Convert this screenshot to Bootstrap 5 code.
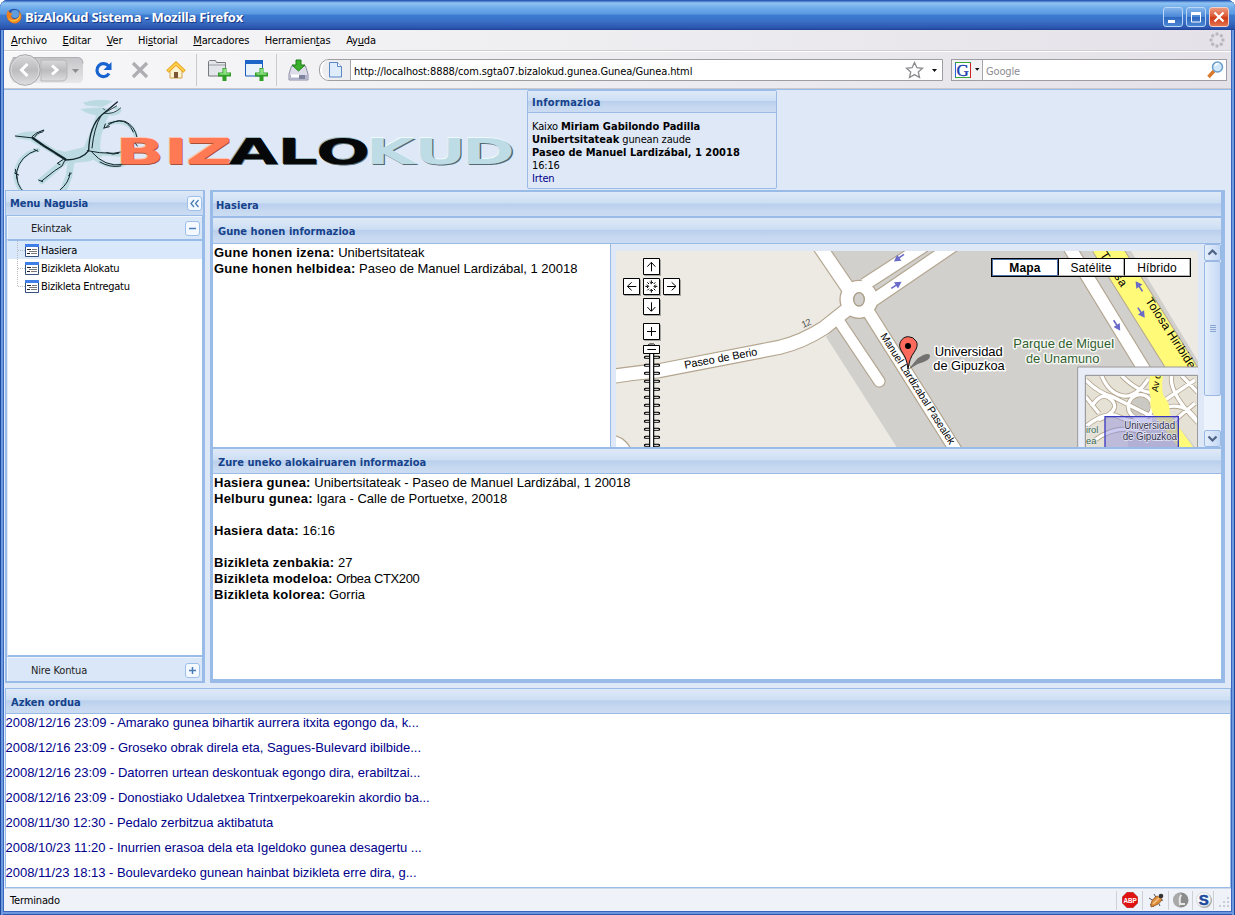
<!DOCTYPE html>
<html lang="eu">
<head>
<meta charset="utf-8">
<title>BizAloKud Sistema</title>
<link href="https://cdn.jsdelivr.net/npm/bootstrap@5.3.0/dist/css/bootstrap.min.css" rel="stylesheet">
<script src="https://cdn.jsdelivr.net/npm/bootstrap@5.3.0/dist/js/bootstrap.bundle.min.js"></script>
<style>
:root{--line:#99bbe8;--pale:#dfe8f6;--ink:#15428b}
html,body{height:915px;overflow:hidden;background:#fff}
body{font:11px/13px "DejaVu Sans Condensed",Tahoma,sans-serif;letter-spacing:-.15px;color:#000}
svg{display:block;flex:none}
.win{height:915px;background:#3a66bd;border-radius:8px 8px 0 0;padding:0 4px 4px;box-shadow:inset 1px 0 #1f49a0,inset -1px 0 #1f49a0,inset 3px 0 #6d9be0,inset -3px 0 #6d9be0,inset 0 -1px #2d55b0,inset 0 -3px #6d96dc}
.titlebar{height:30px;margin:0 -4px;padding:3px 6px 0 6px;gap:3px;border-radius:8px 8px 0 0;background:linear-gradient(#1f3f9a 0,#3d74c9 1px,#8fc3f2 3px,#69a7e9 9px,#5b9ae3 14px,#3b7cd0 15px,#3a70c6 21px,#2b55ae 28px,#1f3f94 30px)}
.titlebar .cap{font:bold 13px/28px "Open Sans",sans-serif;letter-spacing:-.24px;color:#fff;text-shadow:1px 1px #1b3a86}
.wbtns{gap:3px}
.wbtn{width:20px;height:20px;border-radius:3px;border:1px solid #bcd6f5;background:linear-gradient(#83b4ec,#4a86d6 50%,#2f68c0 52%,#4a86d4)}
.wbtn.cls{background:linear-gradient(#ec9a80,#dd5a35 45%,#cf3a16 55%,#e4734e);border-color:#f3cfc8}
.menubar{height:21px;padding:0 6px 0 7px;gap:15.700px;background:linear-gradient(90deg,#f7f7f8,#e4e2e8);border-bottom:1px solid #cfcdd2}
.menubar a{color:#000;text-decoration:none;white-space:nowrap;flex:none}
.menubar u{text-underline-offset:1px}
.tools{height:38px;padding-left:3px;border-top:1px solid #fff;border-bottom:1px solid #c9c8cd;background:linear-gradient(90deg,#f7f7f8,#e4e2e8)}
.vsep{width:1px;height:32px;background:#c9c9ce;flex:none}
.field{height:22px;border:1px solid #9d9da3;background:#fff;flex:none}
.page{height:799px;background:var(--pale);border-top:1px solid var(--line);padding:0 0 0 1px}
.phead{height:23px;padding:2px 5px 0;color:var(--ink);font-weight:bold;letter-spacing:.04px;background:linear-gradient(#dfe9f7 0,#cddff4 45%,#b9cfed 50%,#c6d8f0 75%,#cbdcf2 100%);border-bottom:1px solid var(--line)}
.info{width:250px;height:99px;margin-left:522px;border:1px solid var(--line);border-radius:2px}
.info b{letter-spacing:0}
.info a,.news a{color:#00008b;text-decoration:none}
.side{width:200px;height:493px;border:1px solid var(--line);border-width:1px 2px 2px 1px}
.sidein{border-left:1px solid var(--line);border-right:1px solid var(--line)}
.accord{height:24px;padding:1px 2px 0 23px;background:#d9e7f8;color:#222;border:solid #f0f5fc;border-width:1px 0 0 1px}
.treebox{border:solid var(--line);border-width:2px 0;border-left:1px solid #dfe8f6}
.tbtn{width:15px;height:15px;border:1px solid #9ebfe8;border-radius:3px;background:#f4f9ff;flex:none}
.leaf{height:18px;font-size:11px;letter-spacing:-.24px;padding-left:8px}
.leaf.sel{background:#d9e8fb}
.main{width:1015px;height:493px;border:solid var(--line);border-width:2px 4px 4px 3px}
.arial{font:13px/16px "Liberation Sans",Arial,sans-serif;letter-spacing:-.02px}
.arial b{letter-spacing:.25px}
.mapwrap{width:611px;border-left:1px solid var(--line);background:var(--pale);padding:4px 0 0 5px}
.sbar{width:17px;background:#edf3fd;margin-top:-4px}
.sbar div{border:1px solid #9ab8e2;border-radius:2px;background:linear-gradient(90deg,#e4eefc,#c5d9f5)}
.maptabs{top:14px;left:380px;width:200px;height:19px;border:1px solid #000;font:12px/17px "Liberation Sans",Arial,sans-serif;letter-spacing:.15px}
.maptabs span{flex:1;text-align:center;background:#fff;border:1px solid #b4b4b4;border-width:0 1px 1px 0;line-height:18px}
.maptabs span+span{border-left:1px solid #000}
.maptabs .on{font-weight:bold;border:1px solid #4a6ea8;line-height:16px}
.news{border:1px solid var(--line);border-width:1px 1px 2px;height:201px;margin-top:5px}
.news ul{padding-top:1px;margin-left:-.5px}
.news li{height:25px}
.status{height:23px;background:#eff2f8;border-top:1px solid #cfd8e6;padding:0 2px 0 6px}
.status i{width:1px;height:19px;background:#cfcfd4}
</style>
</head>
<body>
<div class="win">
  <header class="titlebar d-flex align-items-center">
    <svg width="16" height="16" viewBox="0 0 16 16" style="margin-top:-2px"><circle cx="8" cy="8" r="7.300" fill="#2a56b0"/><circle cx="9" cy="6" r="4" fill="#5f9ede"/><path d="M2 2C0 6 0 10 3 13c4 4 10 3 12-2 1-3 0-6-2-8 1 4 0 8-4 8-3 0-4-2-4-4l2-1C6 5 4 5 3 4z" fill="#ee7f1c"/><path d="M2 9c1 4 5 6 9 4 3-2 4-5 3-8 0 4-3 7-7 7-2 0-4-1-5-3z" fill="#fbb93a"/></svg>
    <span class="cap">BizAloKud Sistema - Mozilla Firefox</span>
    <div class="wbtns d-flex ms-auto">
      <span class="wbtn"><svg width="18" height="18"><rect x="4" y="12" width="7" height="3" fill="#fff"/></svg></span>
      <span class="wbtn"><svg width="18" height="18"><path d="M4.500 5v9h9V5z" fill="none" stroke="#fff"/><path d="M4 4h10v3H4z" fill="#fff"/></svg></span>
      <span class="wbtn cls"><svg width="18" height="18"><path d="M4.500 4.500l9 9m0-9l-9 9" stroke="#fff" stroke-width="2.300"/></svg></span>
    </div>
  </header>

  <nav class="menubar d-flex align-items-center">
    <a href="#"><u>A</u>rchivo</a><a href="#"><u>E</u>ditar</a><a href="#"><u>V</u>er</a><a href="#">Hi<u>s</u>torial</a><a href="#"><u>M</u>arcadores</a><a href="#">Herramien<u>t</u>as</a><a href="#">Ay<u>u</u>da</a>
    <svg class="ms-auto" width="16" height="16" viewBox="-8 -8 16 16" fill="#b9b9bd"><circle cy="-6" r="1.700"/><circle cx="4.300" cy="-4.300" r="1.700"/><circle cx="6" r="1.700"/><circle cx="4.300" cy="4.300" r="1.700"/><circle cy="6" r="1.700"/><circle cx="-4.300" cy="4.300" r="1.700"/><circle cx="-6" r="1.700"/><circle cx="-4.300" cy="-4.300" r="1.700"/></svg>
  </nav>

  <div class="tools d-flex align-items-center">
    <svg width="78" height="32" viewBox="0 0 78 32">
      <defs><linearGradient id="bk" x2="0" y2="1"><stop offset="0" stop-color="#d9d9db"/><stop offset=".5" stop-color="#bcbcbf"/><stop offset="1" stop-color="#dedee0"/></linearGradient>
      <linearGradient id="bw" x2="0" y2="1"><stop offset="0" stop-color="#c4c4c8"/><stop offset="1" stop-color="#e8e8ea"/></linearGradient></defs>
      <path d="M6 3h64q6 0 6 6v15q0 5-5 5H6Q-2 16 6 3z" fill="url(#bw)"/><path d="M6 3.500h64q6 0 6 6" fill="none" stroke="#b0b0b4"/>
      <path d="M34 6h21q5 0 5 5v10q0 6-5 6H34z" fill="url(#bk)" stroke="#b6b6ba"/>
      <circle cx="18" cy="16" r="15.300" fill="url(#bk)" stroke="#a9a9ad"/><circle cx="18" cy="16" r="14" fill="none" stroke="#dcdcde"/>
      <path d="M20.500 10L14.500 16l6 6M45 11.500l5 4.500-5 4.500" fill="none" stroke="#fff" stroke-width="3"/>
      <path d="M65 15h7l-3.500 4z" fill="#8d8d92"/>
    </svg>
    <svg width="18" height="18" viewBox="0 0 18 18" style="margin-left:10px"><path d="M14 12.500a6.500 6.500 0 1 1-.5-7.500" fill="none" stroke="#1763d2" stroke-width="3.200"/><path d="M16.500 1v8h-8z" fill="#1763d2"/></svg>
    <svg width="18" height="18" viewBox="0 0 18 18" style="margin-left:18px"><path d="M2 2l14 14M16 2L2 16" stroke="#aeaeb2" stroke-width="3.200"/></svg>
    <svg width="20" height="18" viewBox="0 0 20 18" style="margin-left:17px"><path d="M4 9v8h12V9l-6-5z" fill="#fdf3d0" stroke="#cfa24c"/><path d="M1.500 10.500L10 2.500l8.500 8" fill="none" stroke="#e59a17" stroke-width="3.600"/><path d="M2 10l8-7.500L18 10" fill="none" stroke="#ffd34d" stroke-width="1.800"/><path d="M8 11h4v6H8z" fill="#7d5636"/></svg>
    <span class="vsep" style="margin:0 11px 0 10px"></span>
    <svg width="23" height="22" viewBox="0 0 23 22"><path d="M.5 17V2.500l1-1h6l1 2h9V17z" fill="#e2e5e9" stroke="#77797e"/><path d="M1 6h16" stroke="#9a9ca2"/><path d="M10 13.500h4.500V9h4v4.500H23v4h-4.500V22h-4v-4.500H10z" fill="#2f9e25"/><path d="M11.500 15H16v-4.500h1.500V15H21.500" fill="none" stroke="#8be07f" stroke-width="1.500"/></svg>
    <svg width="23" height="22" viewBox="0 0 23 22" style="margin-left:14px"><path d="M.5 1.500h17V17H.5z" fill="#e9f2fb" stroke="#1c5bb8"/><path d="M0 1h18v4H0z" fill="#1d64c8"/><path d="M10 13.500h4.500V9h4v4.500H23v4h-4.500V22h-4v-4.500H10z" fill="#2f9e25"/><path d="M11.500 15H16v-4.500h1.500V15H21.500" fill="none" stroke="#8be07f" stroke-width="1.500"/></svg>
    <span class="vsep" style="margin:0 11px 0 8px"></span>
    <svg width="21" height="22" viewBox="0 0 21 22"><path d="M3.500 7h14l2.500 8v6H1v-6z" fill="#dcdde8" stroke="#8c8ea6"/><path d="M2 16h17v4.500H2z" fill="#b3b5cc"/><path d="M12 16v4m2-4v4m2-4v4" stroke="#4d5070"/><path d="M3 15.500h8v3H3z" fill="#fff"/><path d="M8 1h5v5h4l-6.500 6L4 6h4z" fill="#3bb02d" stroke="#1f7c18"/></svg>
    <div class="field d-flex align-items-center" style="width:624px;margin-left:10px;border-radius:10px 0 0 10px">
      <svg width="31" height="20" viewBox="0 0 31 20"><path d="M7 0h23.500v20H7Q-3 10 7 0z" fill="#eeeef1"/><path d="M30.500 0v20" stroke="#a5a5aa"/><path d="M9.500 2.500h8l4 4v10.500h-12z" fill="#deecfb" stroke="#5b87c4"/><path d="M17.500 2.500v4h4" fill="#fff" stroke="#5b87c4"/></svg>
      <span style="margin:2px 0 0 3px;letter-spacing:-.12px">http://localhost:8888/com.sgta07.bizalokud.gunea.Gunea/Gunea.html</span>
      <svg class="ms-auto" width="37" height="18" viewBox="0 0 37 18"><path d="M9.500 1.500l2.400 5.200 5.600.6-4.200 3.700 1.200 5.500-5-2.900-5 2.900 1.200-5.500L1.500 7.300l5.600-.6z" fill="#fff" stroke="#8c8c90" stroke-width="1.300"/><path d="M27 8h5l-2.500 3z" fill="#111"/></svg>
    </div>
    <div class="field d-flex align-items-center" style="width:276px;margin-left:8px">
      <svg width="31" height="20" viewBox="0 0 31 20"><path d="M0 0h30.500v20H0z" fill="#f2f2f4"/><path d="M30.500 0v20" stroke="#a5a5aa"/><path d="M3 2h16v16H3z" fill="#fff"/><path d="M3.500 2v16" stroke="#2667d8"/><path d="M3 2.500h16M3 17.500h15" stroke="#37a637"/><path d="M18.500 3v15" stroke="#c22"/><text x="4.600" y="15.500" font-family="Liberation Serif" font-size="17" fill="#1c3fae" stroke="#1c3fae" stroke-width=".4">G</text><path d="M23 8h4.500L25.200 10.800z" fill="#111"/></svg>
      <span style="margin:2px 0 0 3px;color:#8b8b90">Google</span>
      <svg class="ms-auto" width="17" height="18" viewBox="0 0 17 18" style="margin-right:2px"><path d="M1.500 16L7 10" stroke="#d9792c" stroke-width="3.400"/><circle cx="10.500" cy="6" r="5" fill="#cfe8fb" stroke="#6b9cc8" stroke-width="1.500"/><path d="M8 5q1-2.500 3.500-2.500" stroke="#fff" stroke-width="1.500" fill="none"/></svg>
    </div>
  </div>

  <div class="page">
    <section class="position-relative" style="height:100px">
      <svg class="position-absolute top-0 start-0" width="522" height="100" viewBox="5 90 522 100">
        <g transform="translate(0 88) scale(.33333)" fill="none" stroke-linecap="round" stroke-linejoin="round">
          <g stroke="#bbdae2">
            <path d="M250 44q40-14 88-4l-30 16-50-4zM243 64q30-6 78-4l-16 22q-40 0-62-18z" fill="#bbdae2"/>
            <path d="M48 141q24-12 66-10l18-8-20 22-18 12-44-6z" fill="#bbdae2"/>
            <path d="M296 60q-20 66-44 118l-58 14-22-6 24 24 14 16 56-6 40-14q-20-50 26-136z" fill="#bbdae2"/>
            <path d="M345 60q22 4 10 14-20 8-30 2" stroke-width="9"/>
            <path d="M195 218L125 278M215 210l-8 55-20 50" stroke-width="20"/>
            <path d="M115 185Q50 200 46 265q5 35 30 55" stroke-width="12"/>
            <path d="M284 160q20-60 76-58 40 5 50 50M270 195q40 50 100 35M290 196l70 4" stroke-width="12"/>
            <path d="M100 155l95 55" stroke-width="16"/>
          </g>
          <g stroke="#13252a" stroke-width="3">
            <path d="M46 144l54 6M96 146q12-14 36-20l-4 6q-17 2-24 15" stroke-width="3"/>
            <path d="M98 150l34 24 64 40" stroke-width="7"/>
            <path d="M104 162l60 36" stroke="#bbdae2" stroke-width="1.500"/>
            <path d="M196 216q50 0 70-28 2-76 40-108L352 42" stroke-width="4"/>
            <path d="M262 188q34 8 78 8l22-4"/>
            <path d="M312 76q30 4 50-16M318 72l32-18M310 62l4 4" stroke-width="2.500"/>
            <path d="M276 180q6-60 26-95M194 218l-8 16-22 14-40 32M190 214l-18 12 8 4M116 276l12 5"/>
            <path d="M320 116q20-22 55-16 30 14 36 48M312 120l16-4M326 106l30-8q30 0 44 34M316 108l-4 12"/>
            <path d="M112 186q-52 16-62 66-2 40 22 60M102 184l12 6M210 254q-2 30-30 52M206 262l8-6M44 255l12 6M46 244l6 30"/>
            <path d="M275 192q40 46 92 38M300 222q30 18 62 12M320 194q20 8 36 2M406 166l6 8"/>
          </g>
        </g>
        <g font-family="DejaVu Sans" font-weight="bold" font-size="35.500" transform="translate(0 163.700) scale(1.8 1)">
          <g fill="#ffc3b3" transform="translate(-.4 -.8)"><text x="64.200 91.100 103.300">BIZ</text></g>
          <g fill="#a8503a" transform="translate(.4 .8)"><text x="64.200 91.100 103.300">BIZ</text></g>
          <text x="64.200 91.100 103.300" fill="#ff7a54">BIZ</text>
          <text x="127.100 154 175.600" fill="#9bb7be" transform="translate(-.4 -.8)">ALO</text>
          <text x="127.100 154 175.600" fill="#5b6c72" transform="translate(.4 .8)">ALO</text>
          <text x="127.100 154 175.600" fill="#050708">ALO</text>
          <text x="203.200 230.200 256.600" fill="#eefafc" transform="translate(-.4 -.8)">KUD</text>
          <text x="203.200 230.200 256.600" fill="#546a71" transform="translate(.7 1.200)">KUD</text>
          <text x="203.200 230.200 256.600" fill="#bedce5">KUD</text>
        </g>
      </svg>
      <div class="info">
        <div class="phead d-flex align-items-center" style="height:22px;letter-spacing:.2px;padding-left:4px">Informazioa</div>
        <div style="padding:7px 0 0 4px">Kaixo <b>Miriam Gabilondo Padilla</b><br><b>Unibertsitateak</b> gunean zaude<br><b>Paseo de Manuel Lardizábal, 1 20018</b><br>16:16<br><a href="#">Irten</a></div>
      </div>
    </section>

    <div class="d-flex" style="gap:5px">
      <aside class="side d-flex flex-column">
        <div class="phead d-flex align-items-center justify-content-between" style="height:25px;padding:1px 1px 0 4px;letter-spacing:-.08px">Menu Nagusia
          <span class="tbtn"><svg width="13" height="13"><path d="M6 3L3 6.500 6 10M10.500 3l-3 3.500 3 3.500" fill="none" stroke="#4a7db5" stroke-width="1.300"/></svg></span></div>
        <div class="sidein flex-fill d-flex flex-column">
          <div class="accord d-flex align-items-center justify-content-between" style="height:23px;padding-top:0">Ekintzak<span class="tbtn"><svg width="13" height="13"><path d="M3 6.500h7" stroke="#4a7db5" stroke-width="1.500"/></svg></span></div>
          <div class="treebox bg-white flex-fill">
            <div class="leaf sel d-flex align-items-center"><svg width="25" height="18"><path d="M1.500 0v18M2 9.500h7" stroke="#bbb" stroke-dasharray="1 1" fill="none"/><use href="#form"/></svg>Hasiera</div>
            <div class="leaf d-flex align-items-center"><svg width="25" height="18"><defs><g id="form"><path d="M9.500 3.500h13v12h-13z" fill="#fff" stroke="#35507e"/><path d="M9 3h14v3H9z" fill="#3f7de8"/><path d="M11 8.500h4M11 12.500h3" stroke="#222"/><path d="M16 8.500h5M13 10.500h8M15 12.500h6" stroke="#777"/></g></defs><path d="M1.500 0v18M2 9.500h7" stroke="#bbb" stroke-dasharray="1 1" fill="none"/><use href="#form"/></svg>Bizikleta Alokatu</div>
            <div class="leaf d-flex align-items-center" style="letter-spacing:-.28px"><svg width="25" height="18"><path d="M1.500 0v10M2 9.500h7" stroke="#bbb" stroke-dasharray="1 1" fill="none"/><use href="#form"/></svg>Bizikleta Entregatu</div>
          </div>
          <div class="accord d-flex align-items-center justify-content-between">Nire Kontua<span class="tbtn"><svg width="13" height="13"><path d="M3 6.500h7M6.500 3v7" stroke="#4a7db5" stroke-width="1.500"/></svg></span></div>
        </div>
      </aside>

      <main class="main d-flex flex-column">
        <div class="phead d-flex align-items-center" style="height:26px;padding-left:3px;border-bottom-width:2px">Hasiera</div>
        <div class="phead d-flex align-items-center" style="height:26px">Gune honen informazioa</div>
        <div class="d-flex bg-white" style="height:203px">
          <div class="arial flex-fill" style="padding:1px 0 0 1px"><b>Gune honen izena:</b> Unibertsitateak<br><b>Gune honen helbidea:</b> Paseo de Manuel Lardizábal, 1 20018</div>
          <div class="mapwrap d-flex position-relative">
            <svg width="583" height="199" viewBox="30 24 1749 597">
              <defs>
                <g id="arr"><path d="M-17 0H4" stroke="#6a6ac8" stroke-width="5"/><path d="M0-11L20 0 0 11z" fill="#6a6ac8"/></g>
                <path id="lanes" d="M512 420q40 40 80 50l120 60M530 500q30-50 60-20t-40 60M512 560q60-50 100-30t100 10M560 407q20 50 60 60t80-50M620 407q50 50 90 50M640 500a36 36 0 1 0 72 0 36 36 0 1 0-72 0M770 407q-10 50 78 140M750 480l90-60M760 500q60-10 90 50M800 407l48 50M780 540l60-50M540 600q80-60 170-10M512 470l40 50"/>
              </defs>
              <path d="M30 33h1746v588H30z" fill="#eceae2"/>
              <path d="M630 33h945l201 330v258H872L660 290l80-80z" fill="#d1d0cd"/>
              <g fill="none" stroke="#b3a58f">
                <circle cx="10" cy="655" r="70" fill="#fff" stroke-width="4"/>
                <path d="M640 18L740 165" stroke-width="46"/>
                <path d="M775 134L955 17M785 192L1055 8" stroke-width="42"/>
                <path d="M20 409Q90 398 160 392L520 322Q590 305 655 263L740 195" stroke-width="46"/>
                <path d="M700 245L820 424" stroke-width="38" stroke-linecap="round"/>
                <path d="M785 212L1060 648" stroke-width="42"/>
                <path d="M1388 18L1630 414" stroke-width="43"/>
                <path d="M1496 14L1750 420" stroke-width="86"/>
                <circle cx="759" cy="178" r="57" fill="#fff" stroke-width="4"/>
              </g>
              <g fill="none" stroke="#fff">
                <path d="M640 18L740 165" stroke-width="39"/>
                <path d="M775 134L955 17M785 192L1055 8" stroke-width="35"/>
                <path d="M20 409Q90 398 160 392L520 322Q590 305 655 263L740 195" stroke-width="39"/>
                <path d="M700 245L820 424" stroke-width="31" stroke-linecap="round"/>
                <path d="M785 212L1060 648" stroke-width="35"/>
                <path d="M1388 18L1630 414" stroke-width="36"/>
                <path d="M1496 14L1750 420" stroke="#fffa78" stroke-width="80"/>
                <circle cx="759" cy="178" r="53" fill="#fff" stroke="none"/>
              </g>
              <ellipse cx="759" cy="178" rx="16" ry="20" fill="#d1d0cd" stroke="#a99c84" stroke-width="4"/>
              <g><use href="#arr" transform="translate(880 53) rotate(145)"/><use href="#arr" transform="translate(870 136) rotate(-33)"/><use href="#arr" transform="translate(1600 140) rotate(-124)"/><use href="#arr" transform="translate(1605 217) rotate(56)"/><use href="#arr" transform="translate(1532 255) rotate(58)"/></g>
              <g font-family="Liberation Sans" font-size="33" fill="#000">
                <text transform="translate(237 386) rotate(-10.500)" textLength="222" lengthAdjust="spacingAndGlyphs">Paseo de Berio</text>
                <text transform="translate(592 264) rotate(-24)" font-size="28" fill="#555" textLength="28">12</text>
                <text transform="translate(822 288) rotate(57.500)" font-size="32" textLength="388" lengthAdjust="spacingAndGlyphs">Manuel Lardizabal Pasealek</text>
                <text transform="translate(1481 44) rotate(57)" font-size="36" textLength="118">Tolosa</text>
                <text transform="translate(1617 182) rotate(57)" font-size="36" textLength="246">Tolosa Hiribide</text>
              </g>
              <g font-family="Liberation Sans" font-size="39" text-anchor="middle" stroke="#fff" stroke-width="9" stroke-linejoin="round" paint-order="stroke">
                <text x="1088" y="347" textLength="204" lengthAdjust="spacingAndGlyphs">Universidad</text><text x="1089" y="390" textLength="214" lengthAdjust="spacingAndGlyphs">de Gipuzkoa</text>
                <g fill="#2f5f2f" stroke="#f4f4f0"><text x="1373" y="324" textLength="302">Parque de Miguel</text><text x="1370" y="369" textLength="220">de Unamuno</text></g>
              </g>
              <path d="M906 390L935 355Q965 335 972 346 975 362 935 372z" fill="#333" opacity=".6"/>
              <path d="M906 388Q903 355 888 336 876 318 884 304 892 290 907 290 922 290 931 304 938 318 925 336 910 355 906 388z" fill="#fb6a5c" stroke="#111" stroke-width="3"/><circle cx="906" cy="318" r="9"/>

              <path d="M1415 381h364v244h-364z" fill="#e9edf8" stroke="#9a9a9a" stroke-width="3"/>
              <svg x="1439" y="407" width="336" height="214" viewBox="512 407 336 214">
                <path d="M512 407h336v214H512z" fill="#e6e1d5"/>
                <path d="M640 621q-10-60 40-70l90-20 70 90z" fill="#d1d0cd"/><circle cx="676" cy="500" r="28" fill="#cbc9c4"/>
                <use href="#lanes" fill="none" stroke="#b3a58f" stroke-width="15"/><use href="#lanes" fill="none" stroke="#fff" stroke-width="10"/>
                <path d="M706 407h38q-6 40 2 60 20 20 18 55l70 99h-45l-72-95q-14-20-10-55-10-30-1-64z" fill="#fffa78"/>
                <text transform="translate(728 457) rotate(-80)" font-family="Liberation Sans" font-size="28">Av d</text>
                <path d="M570 530h220v95H570z" fill="#8b8be0" fill-opacity=".45" stroke="#3a3ac0" stroke-width="4"/>
                <g font-family="Liberation Sans" font-size="30" fill="#333350" stroke="#e8e8f4" stroke-width="4" paint-order="stroke"><text x="628" y="567" textLength="152" lengthAdjust="spacingAndGlyphs">Universidad</text><text x="623" y="599" textLength="163" lengthAdjust="spacingAndGlyphs">de Gipuzkoa</text><g fill="#3a6b3a"><text x="513" y="579" font-size="28">irol</text><text x="513" y="611" font-size="28">ea</text></g></g>
              </svg>
              <path d="M1438 621V406h337V621" fill="none" stroke="#8c8c8c" stroke-width="3"/>
              <path d="M30 24h1750v597h-4V33H30z" fill="#dfe8f6"/>

              <path d="M115 59h50v49h-50zM55 119h50v49H55zM115 119h50v49h-50zM175 119h50v49h-50zM115 179h50v49h-50zM115 254h50v49h-50z" fill="#888" opacity=".7"/>
              <path d="M112.500 55.500h48v48h-48zM52.500 115.500h48v48h-48zM112.500 115.500h48v48h-48zM172.500 115.500h48v48h-48zM112.500 175.500h48v48h-48zM112.500 250.500h48v48h-48z" fill="#fff" stroke="#000" stroke-width="3"/>
              <g fill="none" stroke="#000" stroke-width="3"><path d="M136.500 94V68M124 80l12-13 12 13M91 139.500H65M77 127l-13 12 13 12M183 139.500h26M197 127l13 12-13 12M136.500 187v26M124 201l12 13 12-13M123 274.500h27M136.500 261v27"/>
              <path d="M136 121v9m-5-4l5 5 5-5M136 158v-9m-5 4l5-5 5 5M118 139h9m-4-5l5 5-5 5M154 139h-9m4-5l-5 5 5 5M124 127l5 5M148 127l-5 5M124 151l5-5M148 151l-5-5"/></g>
              <path d="M118 352h40M118 376h40M118 400h40M118 424h40M118 448h40M118 472h40M118 496h40M118 520h40M118 544h40M118 568h40M118 592h40M118 616h40" stroke="#000" stroke-width="9" stroke-linecap="round"/>
              <path d="M118 352h40M118 376h40M118 400h40M118 424h40M118 448h40M118 472h40M118 496h40M118 520h40M118 544h40M118 568h40M118 592h40M118 616h40" stroke="#fff" stroke-width="3"/>
              <path d="M131 340v285h12V340" fill="#fff" stroke="#000" stroke-width="3.500"/>
              <path d="M126 316l4-4h13l4 4M112.500 316.500h48v24h-48z" fill="#fff" stroke="#000" stroke-width="3"/><path d="M124 328.500h26" stroke="#000" stroke-width="3"/>
            </svg>
            <div class="maptabs position-absolute d-flex"><span class="on">Mapa</span><span>Satélite</span><span>Híbrido</span></div>
            <div class="sbar d-flex flex-column ms-auto">
              <div style="height:17px"><svg width="15" height="15"><path d="M3.500 9.500l4-4 4 4" fill="none" stroke="#4d6185" stroke-width="2.200"/></svg></div>
              <div style="height:135px" class="d-flex align-items-center"><svg width="15" height="10"><path d="M5 1.500h6M5 3.500h6M5 5.500h6M5 7.500h6" stroke="#8aa5cf"/></svg></div>
              <div class="mt-auto" style="height:17px"><svg width="15" height="15"><path d="M3.500 5.500l4 4 4-4" fill="none" stroke="#4d6185" stroke-width="2.200"/></svg></div>
            </div>
          </div>
        </div>
        <div class="phead d-flex align-items-center" style="height:27px;border-top:2px solid var(--line)">Zure uneko alokairuaren informazioa</div>
        <div class="arial bg-white flex-fill" style="padding:1px 0 0 1px"><b>Hasiera gunea:</b> Unibertsitateak - Paseo de Manuel Lardizábal, 1 20018<br><b>Helburu gunea:</b> Igara - Calle de Portuetxe, 20018<br><br><b>Hasiera data:</b> 16:16<br><br><b>Bizikleta zenbakia:</b> 27<br><b>Bizikleta modeloa:</b> <span style="letter-spacing:-.35px">Orbea CTX200</span><br><b>Bizikleta kolorea:</b> Gorria</div>
      </main>
    </div>

    <section class="news bg-white">
      <div class="phead d-flex align-items-center" style="height:25px">Azken ordua</div>
      <ul class="list-unstyled arial mb-0">
        <li><a href="#">2008/12/16 23:09 - Amarako gunea bihartik aurrera itxita egongo da, k...</a></li>
        <li><a href="#">2008/12/16 23:09 - Groseko obrak direla eta, Sagues-Bulevard ibilbide...</a></li>
        <li><a href="#">2008/12/16 23:09 - Datorren urtean deskontuak egongo dira, erabiltzai...</a></li>
        <li><a href="#">2008/12/16 23:09 - Donostiako Udaletxea Trintxerpekoarekin akordio ba...</a></li>
        <li><a href="#">2008/11/30 12:30 - Pedalo zerbitzua aktibatuta</a></li>
        <li><a href="#">2008/10/23 11:20 - Inurrien erasoa dela eta Igeldoko gunea desagertu ...</a></li>
        <li><a href="#">2008/11/23 18:13 - Boulevardeko gunean hainbat bizikleta erre dira, g...</a></li>
      </ul>
    </section>
  </div>

  <footer class="status d-flex align-items-center">
    <span>Terminado</span>
    <i class="ms-auto"></i>
    <svg width="16" height="16" viewBox="0 0 16 16" style="margin:0 4px 0 5px"><path d="M5 0h6l5 5v6l-5 5H5l-5-5V5z" fill="#e01212" stroke="#999" stroke-width=".5"/><text x="1.500" y="10.700" font-family="Liberation Sans" font-weight="bold" font-size="7.500" fill="#fff" textLength="13" lengthAdjust="spacingAndGlyphs">ABP</text></svg>
    <i></i>
    <svg width="17" height="16" viewBox="0 0 17 16" style="margin:0 3px 0 5px"><path d="M1 6l5 3M2 13l5-2M6 2l3 5M15 8l-4 1M12 14l-2-4M5 15l3-4" stroke="#555"/><path d="M3 15Q2 8 9 4l5 3Q13 12 3 15z" fill="#dd8c3c" stroke="#8a4c17" stroke-width=".7"/><path d="M5 12l6-6" stroke="#f7c78a" stroke-width="1.500"/><circle cx="13" cy="4" r="2.300" fill="#333"/></svg>
    <i></i>
    <svg width="16" height="16" viewBox="0 0 16 16" style="margin:0 3px 0 4px"><circle cx="8" cy="8" r="7.500" fill="#8b8b8b"/><path d="M8 .5a7.500 7.500 0 0 0-1 15z" fill="#a9a9a9"/><path d="M8.500 3Q6 5 7 12h5" fill="none" stroke="#e8e8e8" stroke-width="2"/></svg>
    <i></i>
    <svg width="16" height="16" viewBox="0 0 16 16" style="margin:0 1px 0 3px"><circle cx="8.500" cy="8.500" r="7.500" fill="#aaa"/><circle cx="7.500" cy="7.500" r="7.200" fill="#f6f8fb" stroke="#ccc" stroke-width=".6"/><text x="2.800" y="13" font-family="Liberation Sans" font-weight="bold" font-size="15" fill="#1b4b9a" stroke="#1b4b9a" stroke-width=".5">S</text></svg>
    <i></i>
    <svg width="11" height="14" style="margin:6px 0 0 4px" fill="#c8ccd6"><path d="M9 1h2v2H9zM9 5h2v2H9zM5 5h2v2H5zM9 9h2v2H9zM5 9h2v2H5zM1 9h2v2H1z"/></svg>
  </footer>
</div>
</body>
</html>
